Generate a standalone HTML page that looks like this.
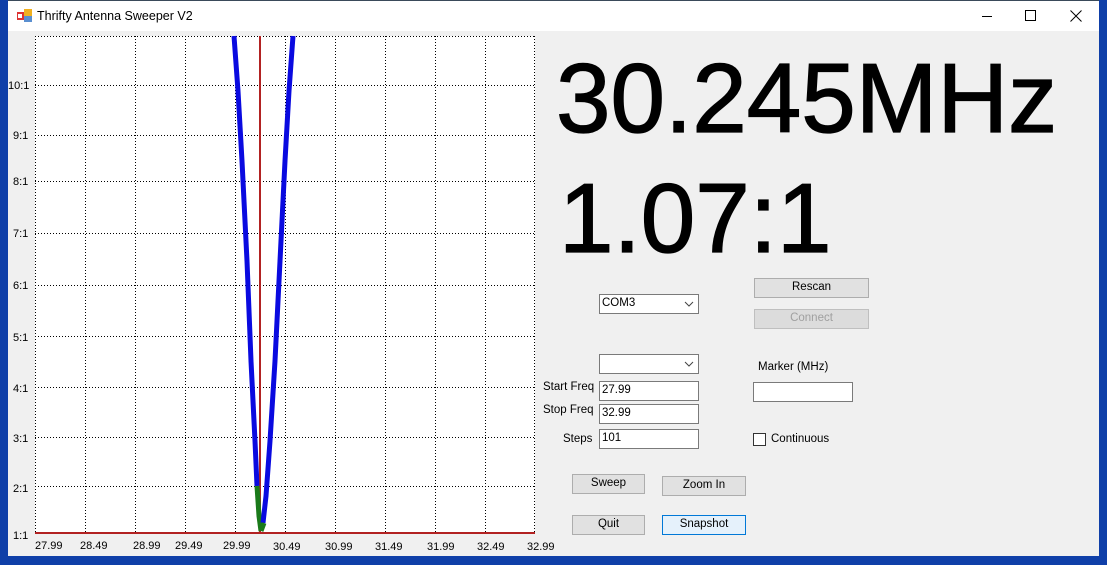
<!DOCTYPE html>
<html><head><meta charset="utf-8"><style>
*{margin:0;padding:0;box-sizing:border-box}
body{width:1107px;height:565px;overflow:hidden;background:#0f3fa8;font-family:"Liberation Sans",Arial,sans-serif;position:relative}
#win{position:absolute;left:8px;top:0;width:1091px;height:556px;background:#f0f0f0;border-top:1px solid #3a4a5a}
#title{position:absolute;left:0;top:0;width:100%;height:30px;background:#fff}
.abs{position:absolute}
.lbl{position:absolute;font-size:11.5px;color:#000;white-space:nowrap}
.tb{position:absolute;background:#fff;border:1px solid #7a7a7a;font-size:11.5px;padding:2px 0 0 2px;height:20px}
.btn{position:absolute;background:#e1e1e1;border:1px solid #adadad;font-size:11.5px;text-align:center;line-height:17px;height:20px}
.big{position:absolute;font-size:98px;color:#000;line-height:1;white-space:nowrap;-webkit-text-stroke:1.3px #000}
</style></head><body>
<div id="win">
 <div id="title">
  <svg class="abs" style="left:9px;top:8px" width="16" height="14"><rect x="0" y="3" width="7" height="8" fill="#d33"/><rect x="7" y="0" width="8" height="7" fill="#f0b020"/><rect x="7" y="7" width="8" height="6" fill="#5a8fd0"/><rect x="1" y="5" width="4" height="4" fill="#fff"/></svg>
  <div class="lbl" style="left:29px;top:8px;font-size:12.5px">Thrifty Antenna Sweeper V2</div>
  <svg class="abs" style="left:972px;top:8px" width="14" height="14"><line x1="2" y1="7.5" x2="12" y2="7.5" stroke="#000"/></svg>
  <svg class="abs" style="left:1016px;top:8px" width="14" height="14"><rect x="1.5" y="1.5" width="10" height="10" fill="none" stroke="#000"/></svg>
  <svg class="abs" style="left:1061px;top:8px" width="14" height="14"><path d="M1.5 1.5L12.5 12.5M12.5 1.5L1.5 12.5" stroke="#000"/></svg>
 </div>
 <svg class="abs" style="left:-8px;top:0" width="560" height="556">
  <rect x="35" y="35" width="500" height="497" fill="#fff"/>
  <g stroke="#000" stroke-dasharray="1,2" stroke-width="1">
   <line x1="35.5" y1="35" x2="35.5" y2="532"/><line x1="85.5" y1="35" x2="85.5" y2="532"/><line x1="135.5" y1="35" x2="135.5" y2="532"/><line x1="185.5" y1="35" x2="185.5" y2="532"/><line x1="235.5" y1="35" x2="235.5" y2="532"/><line x1="285.5" y1="35" x2="285.5" y2="532"/><line x1="335.5" y1="35" x2="335.5" y2="532"/><line x1="385.5" y1="35" x2="385.5" y2="532"/><line x1="435.5" y1="35" x2="435.5" y2="532"/><line x1="485.5" y1="35" x2="485.5" y2="532"/><line x1="534.5" y1="35" x2="534.5" y2="532"/>
   <line x1="35" y1="35.5" x2="535" y2="35.5"/><line x1="35" y1="84.5" x2="535" y2="84.5"/><line x1="35" y1="134.5" x2="535" y2="134.5"/><line x1="35" y1="180.5" x2="535" y2="180.5"/><line x1="35" y1="232.5" x2="535" y2="232.5"/><line x1="35" y1="284.5" x2="535" y2="284.5"/><line x1="35" y1="335.5" x2="535" y2="335.5"/><line x1="35" y1="386.5" x2="535" y2="386.5"/><line x1="35" y1="436.5" x2="535" y2="436.5"/><line x1="35" y1="485.5" x2="535" y2="485.5"/>
  </g>
  <line x1="35" y1="532" x2="535" y2="532" stroke="#b22222" stroke-width="2"/>
  <line x1="260" y1="35" x2="260" y2="532" stroke="#b22222" stroke-width="2"/>
  <polyline points="234,35 238,90 242,160 247,260 251,360 255,440 257,485" fill="none" stroke="#0a0ae0" stroke-width="5"/>
  <polyline points="257,485 259,515 261,530" fill="none" stroke="#1a7a1a" stroke-width="5"/>
  <polyline points="263,522 266,495 270,440 275,360 280,260 285,160 289,90 293,35" fill="none" stroke="#0a0ae0" stroke-width="5"/>
  <polyline points="261,530 264,522" fill="none" stroke="#1a7a1a" stroke-width="5"/>
  <g font-size="11" font-family="Liberation Sans,Arial,sans-serif" fill="#000">
   <text x="8" y="88">10:1</text><text x="13" y="138">9:1</text><text x="13" y="184">8:1</text><text x="13" y="236">7:1</text><text x="13" y="288">6:1</text><text x="13" y="340">5:1</text><text x="13" y="391">4:1</text><text x="13" y="441">3:1</text><text x="13" y="491">2:1</text><text x="13" y="538">1:1</text>
   <text x="35" y="548">27.99</text><text x="80" y="548">28.49</text><text x="133" y="548">28.99</text><text x="175" y="548">29.49</text><text x="223" y="548">29.99</text><text x="273" y="549">30.49</text><text x="325" y="549">30.99</text><text x="375" y="549">31.49</text><text x="427" y="549">31.99</text><text x="477" y="549">32.49</text><text x="527" y="549">32.99</text>
  </g>
 </svg>
 <div class="big" style="left:548px;top:48px">30.245MHz</div>
 <div class="big" style="left:551px;top:168px">1.07:1</div>

 <div class="tb" style="left:591px;top:293px;width:100px">COM3<svg class="abs" style="right:4px;top:6px" width="10" height="6"><path d="M1 1L5 5L9 1" fill="none" stroke="#444"/></svg></div>
 <div class="btn" style="left:746px;top:277px;width:115px">Rescan</div>
 <div class="btn" style="left:746px;top:308px;width:115px;color:#a0a0a0;border-color:#bfbfbf;background:#dcdcdc">Connect</div>
 <div class="tb" style="left:591px;top:353px;width:100px"><svg class="abs" style="right:4px;top:6px" width="10" height="6"><path d="M1 1L5 5L9 1" fill="none" stroke="#444"/></svg></div>
 <div class="lbl" style="left:750px;top:360px">Marker (MHz)</div>
 <div class="tb" style="left:745px;top:381px;width:100px"></div>
 <div class="lbl" style="left:535px;top:380px">Start Freq</div>
 <div class="tb" style="left:591px;top:380px;width:100px">27.99</div>
 <div class="lbl" style="left:535px;top:403px">Stop Freq</div>
 <div class="tb" style="left:591px;top:403px;width:100px">32.99</div>
 <div class="lbl" style="left:555px;top:432px">Steps</div>
 <div class="tb" style="left:591px;top:428px;width:100px">101</div>
 <div class="abs" style="left:745px;top:432px;width:13px;height:13px;background:#fff;border:1px solid #333"></div>
 <div class="lbl" style="left:763px;top:432px">Continuous</div>
 <div class="btn" style="left:564px;top:473px;width:73px">Sweep</div>
 <div class="btn" style="left:654px;top:475px;width:84px">Zoom In</div>
 <div class="btn" style="left:564px;top:514px;width:73px">Quit</div>
 <div class="btn" style="left:654px;top:514px;width:84px;background:#e5f1fb;border-color:#0078d7">Snapshot</div>
</div>
</body></html>
